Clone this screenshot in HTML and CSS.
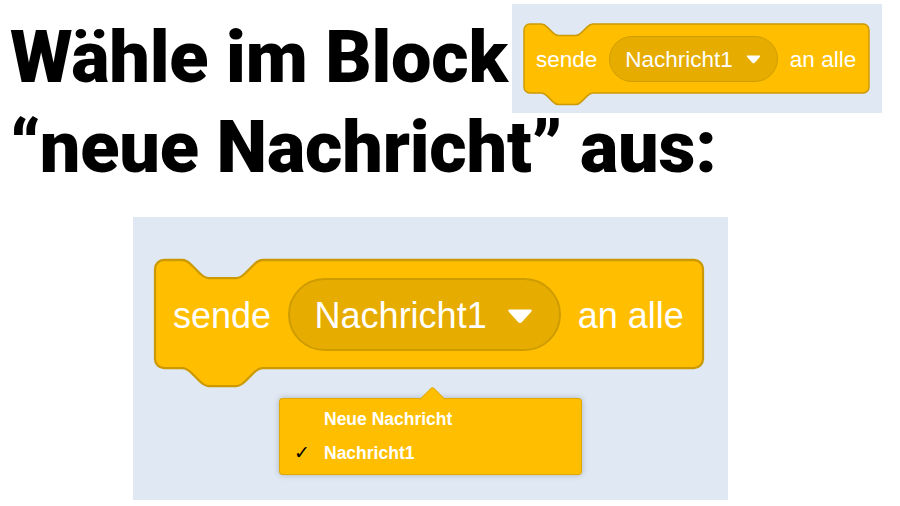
FILE: index.html
```html
<!DOCTYPE html>
<html lang="de">
<head>
<meta charset="utf-8">
<title>Nachricht</title>
<link rel="stylesheet" href="styles.css">
</head>
<body>
<div class="page">
  <div class="row1">
    <h1 class="title">Wähle im Block</h1>
    <div class="panel panel-small">
      <div class="block block-s">
        <svg class="shape" viewBox="0 0 240 56" preserveAspectRatio="none"><path d="M0,4 A4,4 0 0 1 4,0 H12 c2,0 3,1 4,2 l4,4 c1,1 2,2 4,2 h12 c2,0 3,-1 4,-2 l4,-4 c1,-1 2,-2 4,-2 H236 a4,4 0 0 1 4,4 V44 a4,4 0 0 1 -4,4 H48 c-2,0 -3,1 -4,2 l-4,4 c-1,1 -2,2 -4,2 h-12 c-2,0 -3,-1 -4,-2 l-4,-4 c-1,-1 -2,-2 -4,-2 H4 a4,4 0 0 1 -4,-4 z"/></svg>
        <div class="content">
          <span class="lbl">sende</span>
          <span class="pill"><span>Nachricht1</span><svg class="caret" viewBox="0 0 26 14"><path d="M3,0 H23 Q26,0 24,2.5 L15,12.5 Q13,14.5 11,12.5 L2,2.5 Q0,0 3,0 Z"/></svg></span>
          <span class="lbl">an alle</span>
        </div>
      </div>
    </div>
  </div>
  <h1 class="title">“neue Nachricht” aus:</h1>
  <div class="panel panel-big">
    <div class="block block-b">
      <svg class="shape" viewBox="0 0 243.5 56" preserveAspectRatio="none"><path d="M0,4 A4,4 0 0 1 4,0 H12 c2,0 3,1 4,2 l4,4 c1,1 2,2 4,2 h12 c2,0 3,-1 4,-2 l4,-4 c1,-1 2,-2 4,-2 H239.5 a4,4 0 0 1 4,4 V44 a4,4 0 0 1 -4,4 H48 c-2,0 -3,1 -4,2 l-4,4 c-1,1 -2,2 -4,2 h-12 c-2,0 -3,-1 -4,-2 l-4,-4 c-1,-1 -2,-2 -4,-2 H4 a4,4 0 0 1 -4,-4 z"/></svg>
      <div class="content">
        <span class="lbl">sende</span>
        <span class="pill"><span>Nachricht1</span><svg class="caret" viewBox="0 0 26 14"><path d="M3,0 H23 Q26,0 24,2.5 L15,12.5 Q13,14.5 11,12.5 L2,2.5 Q0,0 3,0 Z"/></svg></span>
        <span class="lbl">an alle</span>
      </div>
    </div>
    <div class="menu">
      <div class="item"><span class="check"></span><span>Neue Nachricht</span></div>
      <div class="item"><span class="check">✓</span><span>Nachricht1</span></div>
    </div>
  </div>
</div>
</body>
</html>
```
FILE: styles.css
```css
html, body {
  margin: 0;
  padding: 0;
  background: #ffffff;
}

body {
  font-family: "Liberation Sans", Arial, sans-serif;
  width: 900px;
  height: 506px;
  overflow: hidden;
}

.row1 {
  display: flex;
  align-items: flex-start;
  height: 90px;
  padding-top: 13px;
}

.title {
  margin: 0;
  padding-left: 10px;
  font-family: Roboto, "Liberation Sans", sans-serif;
  font-weight: 900;
  font-size: 72px;
  line-height: 90px;
  letter-spacing: -0.2px;
  color: #000;
  white-space: nowrap;
}

.panel {
  background: #dfe8f3;
  box-sizing: border-box;
}

.panel-small {
  flex: none;
  width: 370px;
  height: 109px;
  margin: -9px 18px 0 auto;
  padding: 20px 0 0 12px;
}

.panel-big {
  width: 595px;
  height: 283px;
  margin: 24px 0 0 133px;
  padding: 43px 0 0 22px;
}

.block {
  display: grid;
}

.block > * {
  grid-area: 1 / 1;
}

.shape {
  width: 100%;
  height: 100%;
  overflow: visible;
}

.shape path {
  fill: #ffbf00;
  stroke: #cc9900;
  stroke-width: 1;
}

.content {
  display: flex;
  align-items: center;
  align-self: start;
  color: #fff;
  white-space: nowrap;
}

.pill {
  display: flex;
  align-items: center;
  box-sizing: border-box;
  background: #e6ac00;
  border-style: solid;
  border-color: #cf9c00;
}

.caret path {
  fill: #fff;
}

/* small block */
.block-s {
  width: 345px;
  height: 80.5px;
}

.block-s .content {
  height: 69px;
  padding-left: 12px;
  gap: 12px;
  font-size: 22.5px;
}

.block-s .lbl {
  padding-top: 2px;
}

.block-s .pill {
  height: 46px;
  border-width: 1px;
  border-radius: 23px;
  padding: 2px 16px 0 15px;
  gap: 13px;
}

.block-s .caret {
  width: 15px;
  height: 9px;
}

/* big block */
.block-b {
  width: 548px;
  height: 126px;
}

.block-b .content {
  height: 108px;
  padding-left: 18px;
  gap: 17px;
  font-size: 36px;
}

.block-b .lbl {
  padding-top: 4px;
}

.block-b .pill {
  height: 73px;
  border-width: 2px;
  border-radius: 37px;
  padding: 4px 26px 0 24.5px;
  gap: 20px;
}

.block-b .caret {
  width: 26px;
  height: 15px;
}

/* dropdown menu */
.menu {
  position: relative;
  width: 303px;
  box-sizing: border-box;
  margin: 12px 0 0 124px;
  padding: 3.5px 0 5.5px 0;
  background: #ffbf00;
  border: 1px solid rgba(0, 0, 0, 0.12);
  border-radius: 4px;
  box-shadow: 0 0 6px rgba(0, 0, 0, 0.22);
}

.menu::before {
  content: "";
  position: absolute;
  left: 143px;
  top: -9px;
  width: 18px;
  height: 18px;
  background: #ffbf00;
  border-top: 1px solid rgba(0, 0, 0, 0.12);
  border-left: 1px solid rgba(0, 0, 0, 0.12);
  border-top-left-radius: 3px;
  transform: rotate(45deg);
}

.item {
  position: relative;
  display: flex;
  align-items: baseline;
  height: 33px;
  line-height: 33px;
  font-size: 17.5px;
  font-weight: 700;
  color: #fff;
}

.check {
  width: 44px;
  box-sizing: border-box;
  padding-left: 14px;
  font-family: "DejaVu Sans", sans-serif;
  font-size: 19px;
  font-weight: 400;
  color: #000;
}
```
